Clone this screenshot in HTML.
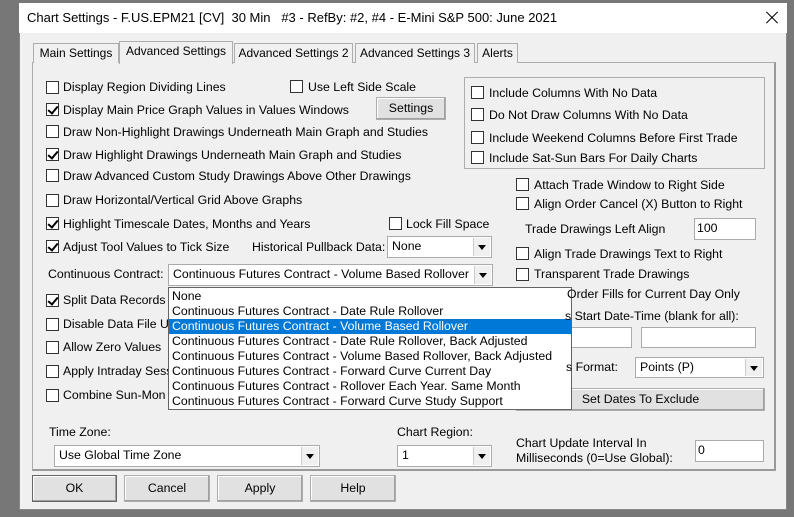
<!DOCTYPE html>
<html><head><style>
*{box-sizing:border-box;margin:0;padding:0}
body{width:794px;height:517px;background:#777;position:relative;overflow:hidden;font-family:"Liberation Sans",sans-serif;font-size:12.3px;color:#000}
.a{position:absolute;white-space:nowrap}
.dlg{position:absolute;left:19px;top:3px;width:768px;height:507px;background:#f0f0f0;border:1px solid #888}
.title{position:absolute;left:19px;top:3px;width:768px;height:30px;background:#fff}
.cb{position:absolute;width:13px;height:13px;border:1px solid #333;background:#fff}
.cb.c::after{content:"";position:absolute;left:3px;top:0px;width:4px;height:8px;border:solid #000;border-width:0 2px 2px 0;transform:rotate(40deg)}
.t{position:absolute;white-space:nowrap;line-height:14px}
.btn{position:absolute;border:1px solid #adadad;background:#e1e1e1;text-align:center;box-shadow:inset -1px -1px 0 #a0a0a0,inset 1px 1px 0 #fff}
.dd{position:absolute;background:#fff;border:1px solid #ababab;padding-left:4px;line-height:19px}
.dd .ar{position:absolute;right:1px;top:1px;bottom:1px;width:17px;background:#f0f0f0;border-left:1px solid #ccc}
.dd .ar::after{content:"";position:absolute;left:4px;top:7px;border:4px solid transparent;border-top:5px solid #000;border-bottom:0}
.in{position:absolute;background:#fff;border:1px solid #ababab;padding-left:2px;line-height:19px}
.tab{position:absolute;top:43px;height:20px;border:1px solid #adadad;border-bottom:none;background:#f0f0f0;text-align:center;line-height:19px;font-size:12px}
.x{position:absolute;left:764px;top:17px;width:16px;height:1px;background:#000}
</style></head><body>
<div class="dlg"></div>
<div class="title"></div>
<div class="t" style="left:27px;top:11px;font-size:13px">Chart Settings - F.US.EPM21 [CV]&nbsp; 30 Min&nbsp;&nbsp; #3 - RefBy: #2, #4 - E-Mini S&amp;P 500: June 2021</div>
<div class="x" style="transform:rotate(45deg)"></div><div class="x" style="transform:rotate(-45deg)"></div>
<!-- panel -->
<div class="a" style="left:32px;top:62px;width:744px;height:409px;border:1px solid #adadad;border-right:2px solid #999;border-bottom:2px solid #999;background:#f0f0f0"></div>
<div class="tab" style="left:33px;width:86px">Main Settings</div>
<div class="tab" style="left:119px;top:41px;width:114px;height:23px;border-bottom:none">Advanced Settings</div>
<div class="tab" style="left:234px;width:119px">Advanced Settings 2</div>
<div class="tab" style="left:355px;width:120px">Advanced Settings 3</div>
<div class="tab" style="left:477px;width:41px">Alerts</div>

<div class="cb" style="left:46px;top:81px"></div><div class="t" style="left:63px;top:80px">Display Region Dividing Lines</div>
<div class="cb" style="left:290px;top:80px"></div><div class="t" style="left:308px;top:80px">Use Left Side Scale</div>
<div class="cb c" style="left:46px;top:103px"></div><div class="t" style="left:63px;top:103px">Display Main Price Graph Values in Values Windows</div>
<div class="btn" style="left:376px;top:97px;width:70px;height:23px;line-height:21px">Settings</div>
<div class="cb" style="left:46px;top:125px"></div><div class="t" style="left:63px;top:125px">Draw Non-Highlight Drawings Underneath Main Graph and Studies</div>
<div class="cb c" style="left:46px;top:148px"></div><div class="t" style="left:63px;top:148px">Draw Highlight Drawings Underneath Main Graph and Studies</div>
<div class="cb" style="left:46px;top:169px"></div><div class="t" style="left:63px;top:169px">Draw Advanced Custom Study Drawings Above Other Drawings</div>
<div class="cb" style="left:46px;top:194px"></div><div class="t" style="left:63px;top:193px">Draw Horizontal/Vertical Grid Above Graphs</div>
<div class="cb c" style="left:46px;top:217px"></div><div class="t" style="left:63px;top:217px">Highlight Timescale Dates, Months and Years</div>
<div class="cb" style="left:389px;top:217px"></div><div class="t" style="left:406px;top:217px">Lock Fill Space</div>
<div class="cb c" style="left:46px;top:240px"></div><div class="t" style="left:63px;top:240px">Adjust Tool Values to Tick Size</div>
<div class="t" style="left:252px;top:240px">Historical Pullback Data:</div>
<div class="dd" style="left:387px;top:236px;width:105px;height:22px">None<span class="ar"></span></div>
<div class="t" style="left:48px;top:267px">Continuous Contract:</div>
<div class="dd" style="left:168px;top:264px;width:325px;height:22px">Continuous Futures Contract - Volume Based Rollover<span class="ar"></span></div>
<div class="cb c" style="left:46px;top:294px"></div><div class="t" style="left:63px;top:293px">Split Data Records</div>
<div class="cb" style="left:46px;top:318px"></div><div class="t" style="left:63px;top:317px">Disable Data File U</div>
<div class="cb" style="left:46px;top:341px"></div><div class="t" style="left:63px;top:340px">Allow Zero Values</div>
<div class="cb" style="left:46px;top:365px"></div><div class="t" style="left:63px;top:364px">Apply Intraday Sess</div>
<div class="cb" style="left:46px;top:389px"></div><div class="t" style="left:63px;top:388px">Combine Sun-Mon</div>

<!-- right group -->
<div class="a" style="left:464px;top:77px;width:301px;height:92px;border:1px solid #adadad"></div>
<div class="cb" style="left:471px;top:86px"></div><div class="t" style="left:489px;top:86px">Include Columns With No Data</div>
<div class="cb" style="left:471px;top:108px"></div><div class="t" style="left:489px;top:108px">Do Not Draw Columns With No Data</div>
<div class="cb" style="left:471px;top:131px"></div><div class="t" style="left:489px;top:131px">Include Weekend Columns Before First Trade</div>
<div class="cb" style="left:471px;top:151px"></div><div class="t" style="left:489px;top:151px">Include Sat-Sun Bars For Daily Charts</div>
<div class="cb" style="left:516px;top:178px"></div><div class="t" style="left:534px;top:178px">Attach Trade Window to Right Side</div>
<div class="cb" style="left:516px;top:197px"></div><div class="t" style="left:534px;top:197px">Align Order Cancel (X) Button to Right</div>
<div class="t" style="left:525px;top:222px">Trade Drawings Left Align</div>
<div class="in" style="left:694px;top:218px;width:62px;height:22px">100</div>
<div class="cb" style="left:516px;top:247px"></div><div class="t" style="left:534px;top:247px">Align Trade Drawings Text to Right</div>
<div class="cb" style="left:516px;top:268px"></div><div class="t" style="left:534px;top:267px">Transparent Trade Drawings</div>
<div class="in" style="left:540px;top:327px;width:92px;height:21px"></div>
<div class="in" style="left:641px;top:327px;width:115px;height:21px"></div>
<div class="dd" style="left:635px;top:357px;width:129px;height:21px">Points (P)<span class="ar"></span></div>
<div class="btn" style="left:516px;top:388px;width:249px;height:23px;line-height:21px">Set Dates To Exclude</div>

<!-- dropdown list -->
<div class="a" style="left:168px;top:287px;width:404px;height:123px;background:#fff;border:1px solid #646464;line-height:15px;padding-top:1px">
<div style="padding-left:3px">None</div>
<div style="padding-left:3px">Continuous Futures Contract - Date Rule Rollover</div>
<div style="padding-left:3px;background:#0078d7;color:#fff">Continuous Futures Contract - Volume Based Rollover</div>
<div style="padding-left:3px">Continuous Futures Contract - Date Rule Rollover, Back Adjusted</div>
<div style="padding-left:3px">Continuous Futures Contract - Volume Based Rollover, Back Adjusted</div>
<div style="padding-left:3px">Continuous Futures Contract - Forward Curve Current Day</div>
<div style="padding-left:3px">Continuous Futures Contract - Rollover Each Year. Same Month</div>
<div style="padding-left:3px">Continuous Futures Contract - Forward Curve Study Support</div>
</div>
<div class="t" style="left:567px;top:287px">Order Fills for Current Day Only</div>
<div class="t" style="left:565px;top:309px">s Start Date-Time (blank for all):</div>
<div class="t" style="left:566px;top:360px">s Format:</div>

<div class="t" style="left:49px;top:425px">Time Zone:</div>
<div class="dd" style="left:54px;top:445px;width:266px;height:22px">Use Global Time Zone<span class="ar"></span></div>
<div class="t" style="left:397px;top:425px">Chart Region:</div>
<div class="dd" style="left:397px;top:445px;width:95px;height:22px">1<span class="ar"></span></div>
<div class="t" style="left:516px;top:436px">Chart Update Interval In</div>
<div class="t" style="left:516px;top:451px">Milliseconds (0=Use Global):</div>
<div class="in" style="left:695px;top:440px;width:69px;height:22px">0</div>

<div class="btn" style="left:32px;top:475px;width:85px;height:27px;line-height:25px;border-color:#666">OK</div>
<div class="btn" style="left:124px;top:475px;width:86px;height:27px;line-height:25px">Cancel</div>
<div class="btn" style="left:217px;top:475px;width:86px;height:27px;line-height:25px">Apply</div>
<div class="btn" style="left:310px;top:475px;width:86px;height:27px;line-height:25px">Help</div>
</body></html>
